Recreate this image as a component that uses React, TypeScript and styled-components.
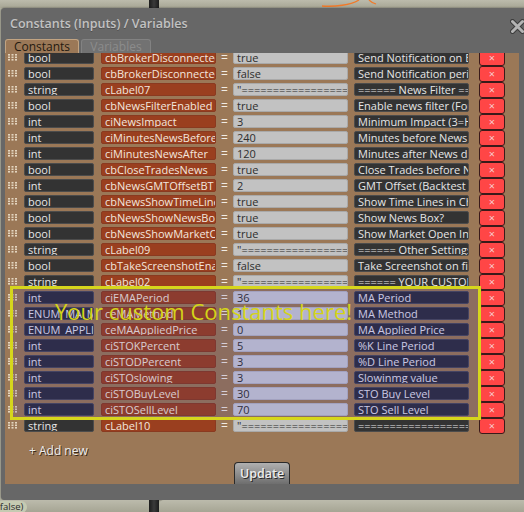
import React from 'react';
import styled, { createGlobalStyle, css } from 'styled-components';

const Global = createGlobalStyle`
  html, body { margin: 0; padding: 0; width: 524px; height: 512px; overflow: hidden; background: #b0af9f; }
  body { font-family: "Open Sans", "Noto Sans", sans-serif; }
`;

type Row = { type: string; name: string; value: string; desc: string };

const EQ = '"' + '='.repeat(40);

const rows: Row[] = [
  { type: 'bool', name: 'cbBrokerDisconnected', value: 'true', desc: 'Send Notification on Broker Disconnect' },
  { type: 'bool', name: 'cbBrokerDisconnectedPeriodic', value: 'false', desc: 'Send Notification periodically' },
  { type: 'string', name: 'cLabel07', value: EQ, desc: '====== News Filter ======' },
  { type: 'bool', name: 'cbNewsFilterEnabled', value: 'true', desc: 'Enable news filter (ForexFactory)' },
  { type: 'int', name: 'ciNewsImpact', value: '3', desc: 'Minimum  Impact (3=High)' },
  { type: 'int', name: 'ciMinutesNewsBefore', value: '240', desc: 'Minutes before News disable' },
  { type: 'int', name: 'ciMinutesNewsAfter', value: '120', desc: 'Minutes after News disable' },
  { type: 'bool', name: 'cbCloseTradesNews', value: 'true', desc: 'Close Trades before News' },
  { type: 'int', name: 'cbNewsGMTOffsetBT', value: '2', desc: 'GMT Offset (Backtest only)' },
  { type: 'bool', name: 'cbNewsShowTimeLines', value: 'true', desc: 'Show Time Lines in Chart' },
  { type: 'bool', name: 'cbNewsShowNewsBox', value: 'true', desc: 'Show News Box?' },
  { type: 'bool', name: 'cbNewsShowMarketOpen', value: 'true', desc: 'Show Market Open Info' },
  { type: 'string', name: 'cLabel09', value: EQ, desc: '====== Other Settings ======' },
  { type: 'bool', name: 'cbTakeScreenshotEnabled', value: 'false', desc: 'Take Screenshot on fill' },
  { type: 'string', name: 'cLabel02', value: EQ, desc: '====== YOUR CUSTOM ======' },
];

const customRows: Row[] = [
  { type: 'int', name: 'ciEMAPeriod', value: '36', desc: 'MA Period' },
  { type: 'ENUM_MA_METHOD', name: 'ceMAMethod', value: '1', desc: 'MA Method' },
  { type: 'ENUM_APPLIED_PRICE', name: 'ceMAAppliedPrice', value: '0', desc: 'MA Applied Price' },
  { type: 'int', name: 'ciSTOKPercent', value: '5', desc: '%K Line Period' },
  { type: 'int', name: 'ciSTODPercent', value: '3', desc: '%D Line Period' },
  { type: 'int', name: 'ciSTOslowing', value: '3', desc: 'Slowinmg value' },
  { type: 'int', name: 'ciSTOBuyLevel', value: '30', desc: 'STO Buy Level' },
  { type: 'int', name: 'ciSTOSellLevel', value: '70', desc: 'STO Sell Level' },
];

const tailRows: Row[] = [
  { type: 'string', name: 'cLabel10', value: EQ, desc: '='.repeat(40) },
];

const Page = styled.div`
  width: 524px;
  height: 512px;
  overflow: hidden;
  display: flex;
  flex-direction: column;
`;

const Backdrop = styled.div<{ $h: number }>`
  flex: none;
  height: ${(p) => p.$h}px;
  display: flex;
  overflow: hidden;
`;

const BackPane = styled.div<{ $w?: number; $round?: boolean }>`
  flex: ${(p) => (p.$w ? `none` : '1')};
  width: ${(p) => (p.$w ? `${p.$w}px` : 'auto')};
  background: linear-gradient(#bcbbac, #a6a594);
  border-top-left-radius: ${(p) => (p.$round ? '5px' : '0')};
  display: flex;
  align-items: flex-start;
  overflow: hidden;
`;

const Divider = styled.div`
  flex: none;
  width: 10px;
  background: linear-gradient(90deg, #1c1c1c, #3a3a3a 50%, #1c1c1c);
`;

const Pill = styled.div`
  height: 12px;
  margin-top: 1px;
  padding: 0 4px 0 0;
  background: #c5cab2;
  border-radius: 0 6px 6px 0;
  font-size: 9.5px;
  line-height: 12px;
  color: #2a2a2a;
  text-indent: -3px;
`;

const Dialog = styled.div`
  flex: none;
  height: 492px;
  width: 530px;
  margin-left: 1px;
  background: #676767;
  border-radius: 4px 4px 0 4px;
  display: flex;
  flex-direction: column;
  box-shadow: 0 0 2px rgba(0, 0, 0, 0.5);
`;

const TitleBar = styled.div`
  flex: none;
  height: 31px;
  display: flex;
  align-items: center;
  padding-left: 9px;
`;

const Title = styled.div`
  font-size: 12.5px;
  font-weight: 600;
  color: #c2c2c2;
  text-shadow: 0 1px 0 #505050;
`;

const CloseBtn = styled.div`
  margin-left: auto;
  margin-right: 6px;
  margin-top: 2px;
  width: 15px;
  height: 15px;
`;

const TabBar = styled.div`
  flex: none;
  height: 14px;
  display: flex;
  gap: 2px;
  padding-left: 4px;
`;

const Tab = styled.div<{ $active?: boolean }>`
  box-sizing: border-box;
  width: ${(p) => (p.$active ? 74 : 70)}px;
  height: 14px;
  border: 1px solid ${(p) => (p.$active ? '#c2a482' : '#828282')};
  border-bottom: none;
  border-radius: 3px 3px 0 0;
  background: ${(p) => (p.$active ? '#9b7857' : '#727272')};
  color: ${(p) => (p.$active ? '#241a10' : '#8c8c8c')};
  font-size: 12px;
  line-height: 13px;
  text-align: center;
`;

const Panel = styled.div`
  flex: none;
  width: 514px;
  height: 431px;
  margin-left: 4px;
  background: #9b7857;
  display: flex;
  flex-direction: column;
  overflow: hidden;
`;

const List = styled.div`
  margin-top: -2px;
  display: flex;
  flex-direction: column;
`;

const RowLine = styled.div`
  height: 16px;
  flex: none;
  display: flex;
  align-items: flex-start;
  padding-left: 3px;
`;

const HandleWrap = styled.div`
  width: 9px;
  height: 13px;
  display: flex;
  align-items: center;
`;

const boxBase = css`
  box-sizing: border-box;
  height: 13px;
  border-radius: 2px;
  border: 1px solid;
  padding: 0 3px;
  font-size: 11px;
  line-height: 11px;
  white-space: nowrap;
  overflow: hidden;
  display: flex;
  align-items: center;
  flex: none;
`;

const TypeBox = styled.div<{ $custom?: boolean }>`
  ${boxBase};
  margin-left: 7px;
  width: 70px;
  background: ${(p) => (p.$custom ? '#2c2d40' : '#333333')};
  border-color: ${(p) => (p.$custom ? '#47485c' : '#4c4c4c')};
  color: ${(p) => (p.$custom ? '#e2e2f4' : '#e6e6e6')};
`;

const NameBox = styled.div`
  ${boxBase};
  margin-left: 7px;
  width: 115px;
  background: #9a3f1f;
  border-color: #8a3a20;
  color: #f2e6de;
`;

const Eq = styled.div`
  width: 17px;
  flex: none;
  height: 13px;
  text-align: center;
  font-size: 12px;
  line-height: 13px;
  color: #f2ece4;
`;

const ValueBox = styled.div<{ $custom?: boolean }>`
  ${boxBase};
  width: 115px;
  background: ${(p) => (p.$custom ? '#c8cada' : '#c2c2c2')};
  border-color: ${(p) => (p.$custom ? '#b4b6c8' : '#a9a9a9')};
  color: #2e2e2e;
`;

const DescBox = styled.div<{ $custom?: boolean }>`
  ${boxBase};
  margin-left: 6px;
  width: 115px;
  background: ${(p) => (p.$custom ? '#2c2d40' : '#333333')};
  border-color: ${(p) => (p.$custom ? '#47485c' : '#4c4c4c')};
  color: ${(p) => (p.$custom ? '#e2e2f4' : '#e6e6e6')};
`;

const DeleteBtn = styled.div`
  box-sizing: border-box;
  flex: none;
  margin-left: 10px;
  margin-top: -1px;
  width: 26px;
  height: 16px;
  background: #ff4646;
  border: 1px solid #3a1a1a;
  border-radius: 3px;
  color: #f7cccc;
  font-size: 11px;
  line-height: 13px;
  text-align: center;
`;

const CustomGroup = styled.div`
  position: relative;
  display: flex;
  flex-direction: column;
`;

const Highlight = styled.div`
  position: absolute;
  left: 5px;
  width: 471px;
  top: -5px;
  bottom: -1px;
  box-sizing: border-box;
  border: 3px solid #d6d61c;
  background: rgba(60, 50, 140, 0.15);
  pointer-events: none;
  z-index: 2;
  padding: 11px 0 0 42px;
  color: #d4d418;
  font-size: 22px;
  line-height: 22px;
  white-space: nowrap;
`;

const AddNew = styled.div`
  margin-top: 8px;
  margin-left: 24px;
  height: 16px;
  font-size: 12px;
  line-height: 16px;
  color: #ececec;
  text-shadow: 1px 1px 0 #3a2a1a;
`;

const UpdateButton = styled.div`
  margin-top: auto;
  align-self: center;
  box-sizing: border-box;
  width: 56px;
  height: 22px;
  border: 1px solid #2a2a2a;
  border-bottom: none;
  border-radius: 4px 4px 0 0;
  background: linear-gradient(#b0b0b0, #6e6e6e);
  color: #ececec;
  font-size: 12.5px;
  font-weight: 600;
  line-height: 21px;
  text-align: center;
  text-shadow: 1px 1px 0 #2a2a2a;
`;

const Handle = () => (
  <HandleWrap>
    <svg width="9" height="7" viewBox="0 0 9 7">
      {[0, 2.5, 5].map((y) =>
        [0, 3.5, 7].map((x) => <rect key={`${x}-${y}`} x={x} y={y} width="2" height="1.6" fill="#e4d6c0" />)
      )}
    </svg>
  </HandleWrap>
);

const RowView = ({ row, custom }: { row: Row; custom?: boolean }) => (
  <RowLine>
    <Handle />
    <TypeBox $custom={custom}>{row.type}</TypeBox>
    <NameBox>{row.name}</NameBox>
    <Eq>=</Eq>
    <ValueBox $custom={custom}>{row.value}</ValueBox>
    <DescBox $custom={custom}>{row.desc}</DescBox>
    <DeleteBtn>×</DeleteBtn>
  </RowLine>
);

export default function App() {
  return (
    <Page>
      <Global />
      <Backdrop $h={8}>
        <BackPane $w={149} />
        <Divider />
        <BackPane>
          <svg width="80" height="8" viewBox="0 0 80 8" style={{ marginLeft: 162 }}>
            <path d="M1 6 C14 7 30 5 38 0" stroke="#f07a2a" strokeWidth="1.3" fill="none" />
            <path d="M48 0 C50 2 52 3 55 4" stroke="#f07a2a" strokeWidth="1.3" fill="none" />
          </svg>
        </BackPane>
      </Backdrop>
      <Dialog>
        <TitleBar>
          <Title>Constants (Inputs) / Variables</Title>
          <CloseBtn>
            <svg width="15" height="15" viewBox="0 0 15 15">
              <path d="M2.5 2.5 L12.5 12.5 M12.5 2.5 L2.5 12.5" stroke="#3c3c3c" strokeWidth="5" strokeLinecap="round" />
              <path d="M2.5 2.5 L12.5 12.5 M12.5 2.5 L2.5 12.5" stroke="#b4b4b4" strokeWidth="3" strokeLinecap="round" />
            </svg>
          </CloseBtn>
        </TitleBar>
        <TabBar>
          <Tab $active>Constants</Tab>
          <Tab>Variables</Tab>
        </TabBar>
        <Panel>
          <List>
            {rows.map((r, i) => (
              <RowView key={i} row={r} />
            ))}
            <CustomGroup>
              <Highlight>Your custom Constants here!</Highlight>
              {customRows.map((r, i) => (
                <RowView key={i} row={r} custom />
              ))}
            </CustomGroup>
            {tailRows.map((r, i) => (
              <RowView key={i} row={r} />
            ))}
          </List>
          <AddNew>+ Add new</AddNew>
          <UpdateButton>Update</UpdateButton>
        </Panel>
      </Dialog>
      <Backdrop $h={12}>
        <BackPane $w={149}>
          <Pill>(false)</Pill>
        </BackPane>
        <Divider />
        <BackPane $round />
      </Backdrop>
    </Page>
  );
}
